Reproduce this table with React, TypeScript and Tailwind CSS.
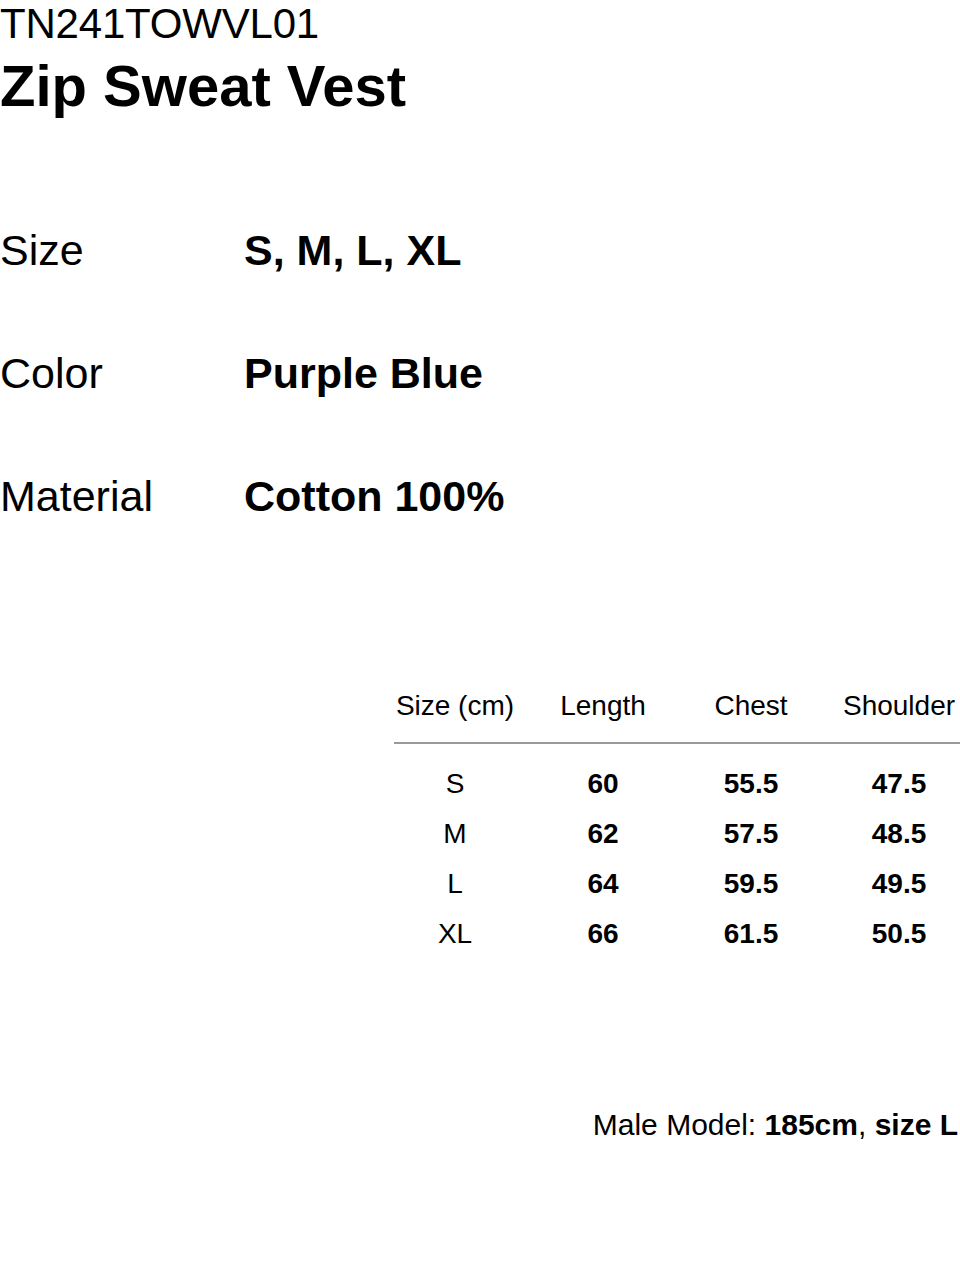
const rows = [
  { size: 'S', length: '60', chest: '55.5', shoulder: '47.5' },
  { size: 'M', length: '62', chest: '57.5', shoulder: '48.5' },
  { size: 'L', length: '64', chest: '59.5', shoulder: '49.5' },
  { size: 'XL', length: '66', chest: '61.5', shoulder: '50.5' },
];

const specs = [
  { label: 'Size', value: 'S, M, L, XL' },
  { label: 'Color', value: 'Purple Blue' },
  { label: 'Material', value: 'Cotton 100%' },
];

export default function App() {
  return (
    <div
      className="w-[960px] h-[1281px] bg-white text-black overflow-hidden"
      style={{ fontFamily: '"Liberation Sans", Arial, sans-serif' }}
    >
      <header>
        <p className="text-[42px] leading-[47px] tracking-[-0.2px]">TN241TOWVL01</p>
        <h1 className="mt-[10px] text-[58px] leading-none font-bold">Zip Sweat Vest</h1>
      </header>

      <section className="mt-[114px] flex flex-col gap-[80px]">
        {specs.map((s) => (
          <div key={s.label} className="grid grid-cols-[244px_1fr] text-[43px] leading-none">
            <span>{s.label}</span>
            <span className="font-bold">{s.value}</span>
          </div>
        ))}
      </section>

      <section className="mt-[174px] ml-[381px] text-[28px]">
        <div className="grid grid-cols-[148px_148px_148px_148px] leading-none">
          <span className="text-center">Size (cm)</span>
          <span className="text-center">Length</span>
          <span className="text-center">Chest</span>
          <span className="text-center">Shoulder</span>
        </div>
        <div className="mt-[22px] ml-[13px] h-[2px] bg-[#9a9a9a]" />
        <div className="mt-[15px]">
          {rows.map((r) => (
            <div key={r.size} className="grid grid-cols-[148px_148px_148px_148px] h-[50px] leading-[50px]">
              <span className="text-center">{r.size}</span>
              <span className="text-center font-bold">{r.length}</span>
              <span className="text-center font-bold">{r.chest}</span>
              <span className="text-center font-bold">{r.shoulder}</span>
            </div>
          ))}
        </div>
      </section>

      <footer className="mt-[151px] pr-[2px] text-right text-[30px] leading-none">
        Male Model: <span className="font-bold">185cm</span>, <span className="font-bold">size L</span>
      </footer>
    </div>
  );
}
